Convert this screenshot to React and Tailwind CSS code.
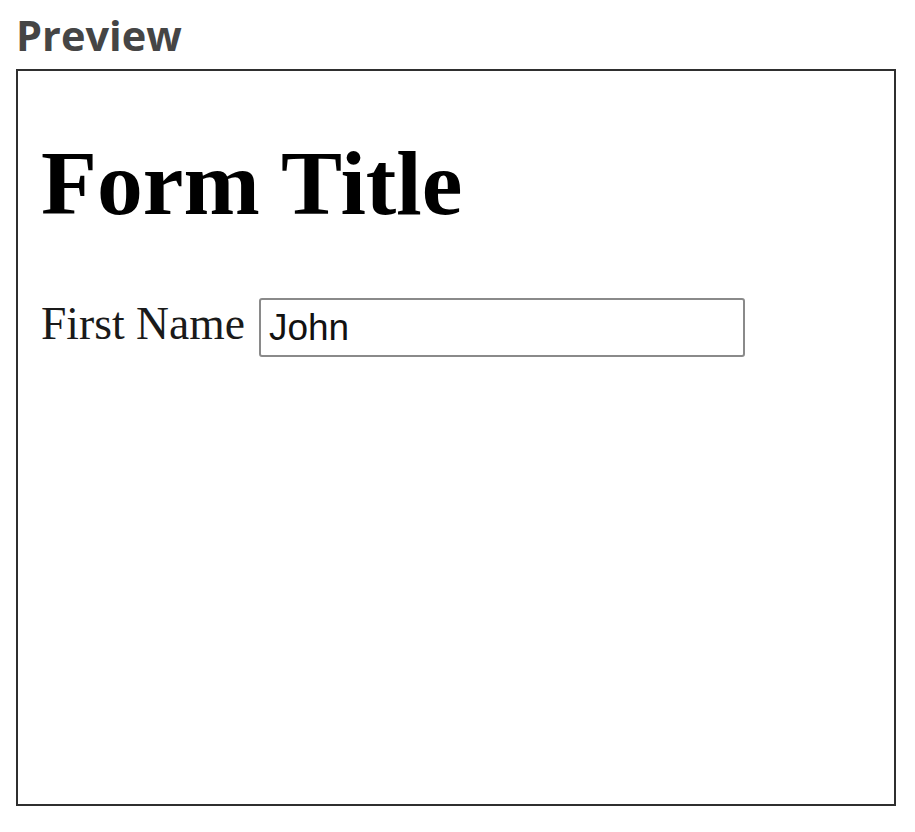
export default function App() {
  return (
    <div className="min-h-screen bg-white pl-[16px] pt-[7px]">
      <h2 className="font-['Open_Sans',sans-serif] text-[41.5px] font-bold leading-[57px] text-[#454545]">
        Preview
      </h2>
      <div className="mt-[5px] h-[737px] w-[880px] border-2 border-[#2f2f2f] pl-[23px] pr-[24px] pt-[62px] font-['Liberation_Serif',serif] text-black">
        <h1 className="text-[91.6px] font-bold leading-[100px]">Form Title</h1>
        <div className="mt-[65px] flex items-start gap-[14px]">
          <label className="text-[45.6px] leading-[51px] text-[#1a1a1a]">First Name</label>
          <input
            type="text"
            defaultValue="John"
            className="h-[59px] w-[486px] rounded-[3px] border-2 border-[#8a8a8a] px-[8px] font-['Liberation_Sans',sans-serif] text-[37px] text-[#111] outline-none"
          />
        </div>
      </div>
    </div>
  );
}
